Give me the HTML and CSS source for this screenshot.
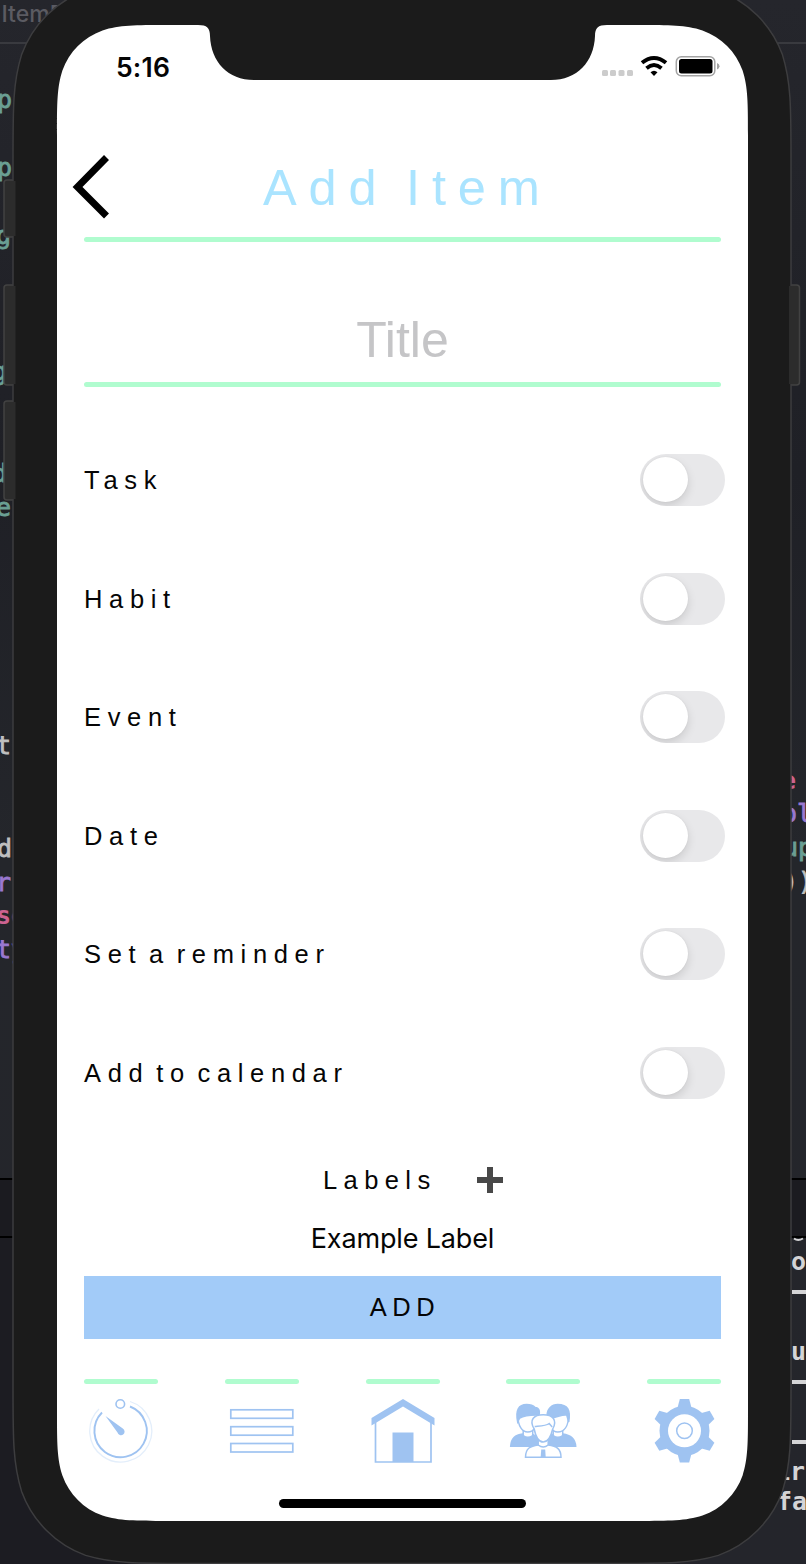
FILE: index.html
```
<!DOCTYPE html>
<html lang="en">
<head>
<meta charset="utf-8">
<title>Add Item</title>
<link rel="stylesheet" href="styles.css">
</head>
<body>
<div class="stage">
  <svg class="backdrop" viewBox="0 0 806 1564" aria-hidden="true">
    <defs>
      <linearGradient id="desk" x1="0" y1="0" x2="0" y2="1">
        <stop offset="0" stop-color="#25262c"/><stop offset=".15" stop-color="#222329"/><stop offset=".3" stop-color="#1f2026"/><stop offset=".55" stop-color="#24262b"/><stop offset="1" stop-color="#24252b"/>
      </linearGradient>
    </defs>
    <rect width="806" height="1564" fill="url(#desk)"/>
    <rect y="1179" width="806" height="57" fill="#1b1b20"/>
    <rect y="1238" width="400" height="326" fill="#1c1c22"/>
    <path d="M0 43H806" stroke="#393a3f" stroke-width="2"/>
    <path d="M0 1179H806M0 1237H806" stroke="#000" stroke-width="2"/>
    <text class="tab-name" x="1.500" y="22">ItemF</text>
    <g class="code type">
      <text x="-3" y="108">p</text><text x="-3" y="176">p</text><text x="-4" y="244">g</text>
      <text x="-8" y="380">g</text><text x="-8" y="482">d</text><text x="-4" y="516">er</text>
      <text x="783" y="856">up</text>
    </g>
    <g class="code plain"><text x="-4" y="754">t:</text><text x="-3" y="857">d</text><text x="783" y="890">)</text><text x="798" y="890">)</text></g>
    <g class="code member"><text x="-4" y="891">r</text><text x="-4" y="958">ty</text><text x="782" y="822">ol</text></g>
    <g class="code keyword"><text x="-4" y="924">se</text><text x="781" y="789">e</text></g>
    <g class="code console">
      <text x="791" y="1270">o</text><text x="791" y="1360">u</text><text x="775" y="1480">ir</text><text x="777" y="1510">fa</text>
      <path d="M792 1292h14M792 1382h14M792 1442h14" stroke="#d4d4d6" stroke-width="4"/>
      <path d="M794 1238.500q4 3 9 0" fill="none" stroke="#d4d4d6" stroke-width="2"/>
    </g>
    <g class="side-button">
      <rect x="4" y="180" width="20" height="57" rx="3"/><rect x="4" y="285" width="20" height="100" rx="3"/>
      <rect x="4" y="401" width="20" height="99" rx="3"/><rect x="779" y="285" width="20.500" height="100" rx="3"/>
    </g>
    <path class="bezel" d="M189-18H615C666-18 691-18 718.400-9.400C748.100 1.400 771.600 24.900 782.400 54.600C791 82 791 107 791 158V1388C791 1439 791 1464 782.400 1491.400C771.600 1521.100 748.100 1544.600 718.400 1555.400C691 1563.500 666 1563.500 615 1563.500H189C138 1563.500 113 1563.500 85.600 1555.400C55.900 1544.600 32.400 1521.100 21.600 1491.400C13 1464 13 1439 13 1388V158C13 107 13 82 21.600 54.600C32.400 24.900 55.900 1.400 85.600-9.400C113-18 138-18 189-18Z"/>
    <path d="M13.500 181V236M13.500 286V384M13.500 402V499M791 286V384" stroke="#2c2c2c" stroke-width="4"/>
    <path fill="#fff" d="M167 25H198C207 25 210 28 210 36C211 62 228 80 254 80H551C577 80 594 62 595 36C595 28 598 25 607 25H638C670 25 685.500 25 702.500 30.400C721.500 37.200 735.800 51.500 742.600 70.500C748 87.500 748 103 748 135V1411C748 1443 748 1458.500 742.600 1475.500C735.800 1494.500 721.500 1508.800 702.500 1515.600C685.500 1521 670 1521 638 1521H167C135 1521 119.500 1521 102.500 1515.600C83.500 1508.800 69.200 1494.500 62.400 1475.500C57 1458.500 57 1443 57 1411V135C57 103 57 87.500 62.400 70.500C69.200 51.500 83.500 37.200 102.500 30.400C119.500 25 135 25 167 25Z"/>
  </svg>

  <main class="screen">
    <div class="status">
      <span class="time">5:16</span>
      <svg class="status-icons" viewBox="600 54 122 24">
        <g fill="#ccc"><rect x="602" y="70" width="6" height="6" rx="1.500"/><rect x="610" y="70" width="6" height="6" rx="1.500"/><rect x="618.500" y="70" width="6" height="6" rx="1.500"/><rect x="627" y="70" width="6" height="6" rx="1.500"/></g>
        <path d="M642 62.800Q654 53 666 62.800" fill="none" stroke="#000" stroke-width="3.900"/>
        <path d="M646.500 68.200Q654 62 661.500 68.200" fill="none" stroke="#000" stroke-width="3.900"/>
        <path d="M650.500 72.300Q654 69 657.500 72.300L654 76Z"/>
        <rect x="676.300" y="56.700" width="38.500" height="19" rx="5" fill="none" stroke="#a3a3a3" stroke-width="1.500"/>
        <rect x="679" y="59" width="33.500" height="14.500" rx="2.500"/>
        <path d="M717 63Q719.500 64 719.500 66.200T717 69.500Z" fill="#a3a3a3"/>
      </svg>
    </div>

    <header class="header">
      <svg class="back" viewBox="72 154 38 66"><path d="M106.500 157.500L77.500 187L106.500 216" fill="none" stroke="#000" stroke-width="7"/></svg>
      <h1 class="heading">Add Item</h1>
    </header>
    <div class="rule"></div>
    <div class="title-field">Title</div>
    <div class="rule"></div>

    <div class="options">
      <div class="option"><span>Task</span><i class="switch"></i></div>
      <div class="option"><span>Habit</span><i class="switch"></i></div>
      <div class="option"><span>Event</span><i class="switch"></i></div>
      <div class="option"><span>Date</span><i class="switch"></i></div>
      <div class="option"><span>Set a reminder</span><i class="switch"></i></div>
      <div class="option"><span>Add to calendar</span><i class="switch"></i></div>
    </div>

    <div class="labels"><span>Labels</span><svg class="plus" viewBox="0 0 26 26"><path d="M13 0V26M0 13H26" stroke="#484848" stroke-width="6"/></svg></div>
    <div class="example">Example Label</div>
    <div class="add">ADD</div>

    <nav class="tabs">
      <div class="tab"><svg viewBox="84 1397 74 68">
        <g fill="none" stroke="#9fc3f1"><circle cx="120.300" cy="1404" r="4.300" stroke-width="1.600"/><path stroke-width="1.900" d="M130 1406.500A26.200 26.200 0 1 1 102 1412.500"/><path stroke="#e3eefb" stroke-width="1.300" d="M130 1401.500A31 31 0 1 1 99 1409"/></g>
        <path fill="#9fc3f1" d="M105.500 1416L122.800 1428.500A3.600 3.600 0 1 1 117.500 1432.500Z"/></svg></div>
      <div class="tab"><svg viewBox="224.700 1397 74 68"><g fill="none" stroke="#9fc3f1" stroke-width="1.700"><rect x="230.500" y="1409.800" width="62" height="8.500"/><rect x="230.500" y="1426.700" width="62" height="8.500"/><rect x="230.500" y="1443.500" width="62" height="8.500"/></g></svg></div>
      <div class="tab"><svg viewBox="365.500 1397 74 68"><g fill="#9fc3f1"><path d="M371 1418L402.500 1399L434 1418V1425.500L402.500 1406.500L371 1425.500Z"/><rect x="392" y="1432.500" width="21" height="29.500"/></g><path d="M375 1422V1462H430.500V1422" fill="none" stroke="#9fc3f1" stroke-width="1.700"/></svg></div>
      <div class="tab"><svg viewBox="506.300 1397 74 68">
        <g fill="#fff" stroke="#9fc3f1" stroke-width="1.500">
          <path fill="#9fc3f1" d="M511 1446.300C511.500 1438 516 1434.500 523 1434L533 1434.500L544 1440L552 1434.500L563 1434C571 1435 575.500 1439 576 1446.300Z"/>
          <path d="M523.500 1429V1435.500Q528 1439 533 1435.500V1429Z"/><path d="M553.500 1429V1435.500Q558 1439 563 1435.500V1429Z"/>
          <path d="M518 1414C518 1427 523 1432 528 1432C534 1432 538 1427 538 1414Z"/><path d="M549 1414C549 1427 553 1432 558 1432C564 1432 569 1427 569 1414Z"/>
          <path fill="#9fc3f1" d="M518 1422C515.500 1410 519 1404.500 527 1404.500C531 1404.500 534 1406 535.500 1407.500C540 1408 540 1412 539.500 1415C533 1415 526 1414.500 520 1418Z"/>
          <path fill="#9fc3f1" d="M569 1422C571 1410 568 1404.500 558 1404.500C552 1404.500 547.500 1409 547.500 1415L551 1418C557 1418 562 1414 567 1415Z"/>
          <path d="M525.800 1457.300C525.800 1448 531 1446 538.500 1445V1440H548.500V1445C557 1446 561.300 1449 561.300 1457.300Z"/>
          <path d="M534.500 1429C529 1420 534 1414.700 543.500 1414.700S558 1420 553 1429Q550 1442 543.500 1442T534.500 1429Z"/>
          <path d="M535 1426.500C540 1426 546 1426 549.500 1423.500L552.500 1427" fill="none"/>
          <path d="M538.500 1445Q543.500 1449 548.500 1445" fill="none"/>
        </g><path d="M541.500 1449.500H545.500L546 1457H541Z" fill="#9fc3f1"/></svg></div>
      <div class="tab"><svg viewBox="647 1397 74 68">
        <g fill="#9fc3f1"><circle cx="684.500" cy="1430.800" r="25"/>
        <path id="tooth" d="M677.500 1408L679.800 1399H689.200L691.500 1408V1453.600L689.200 1462.600H679.800L677.500 1453.600Z"/>
        <use href="#tooth" transform="rotate(60 684.500 1430.800)"/><use href="#tooth" transform="rotate(120 684.500 1430.800)"/></g>
        <circle cx="684.500" cy="1430.800" r="16.500" fill="#fff"/><circle cx="684.500" cy="1430.800" r="7.800" fill="none" stroke="#9fc3f1" stroke-width="1.500"/></svg></div>
    </nav>
    <div class="home-bar"></div>
  </main>
</div>
</body>
</html>
```
FILE: styles.css
```
* { box-sizing: border-box; }
body { margin: 0; background: #222329; }
.stage { position: relative; display: flex; width: 806px; height: 1564px; overflow: hidden; }
.backdrop { position: absolute; inset: 0; width: 806px; height: 1564px; }
.tab-name { font: 500 23px Inter, sans-serif; fill: #5b5b62; }
.code { font: 500 25px "DejaVu Sans Mono", monospace; }
.type { fill: #6a9f93; stroke: #6a9f93; stroke-width: .8; }
.plain { fill: #bfbfbf; stroke: #bfbfbf; stroke-width: .8; }
.member { fill: #9a78d0; stroke: #9a78d0; stroke-width: .8; }
.keyword { fill: #cc6390; font-weight: 700; }
.console { fill: #d4d4d6; font-weight: 700; font-size: 25px; }
.side-button rect { fill: #2c2c2c; stroke: #424242; stroke-width: 1.500px; }
.bezel { fill: #1b1b1b; stroke: #3d3d3f; stroke-width: 1.500px; }

.screen {
  position: relative;
  display: flex;
  flex-direction: column;
  width: 691px;
  height: 1496px;
  margin: 25px 0 0 57px;
  padding: 0 27px;
  font-family: "Liberation Sans", Arial, sans-serif;
  color: #050505;
}
.status { display: flex; justify-content: space-between; height: 129px; padding-top: 29px; }
.time { margin-left: 32px; font: 600 26.500px/26px Inter, sans-serif; letter-spacing: .2px; }
.status-icons { width: 122px; height: 24px; margin-right: -1px; }
.header { display: flex; height: 83px; margin-left: -12px; }
.back { width: 38px; height: 66px; }
.heading { margin: 0 0 0 153px; font-size: 50.500px; line-height: 67px; font-weight: 400; letter-spacing: 11.900px; word-spacing: -8.500px; color: #aae4ff; white-space: nowrap; }
.rule { flex: none; height: 5px; border-radius: 3px; background: #b0fccf; }
.title-field { height: 140px; padding-top: 68px; font-size: 50px; line-height: 60px; text-align: center; color: #c5c5c7; }
.options { display: flex; flex-direction: column; height: 711px; margin-top: 34px; }
.option { display: flex; align-items: center; justify-content: space-between; height: 118.500px; font-size: 25.500px; letter-spacing: 6.650px; word-spacing: -6.900px; margin-right: -4px; white-space: nowrap; }
.option span { padding-top: 1px; }
.switch { display: block; width: 85px; height: 52px; padding: 3px; border-radius: 26px; background: #e8e8ea; overflow: hidden; }
.switch::before { content: ""; display: block; width: 45px; height: 45px; border-radius: 50%; background: #fff; box-shadow: 0 4px 10px rgba(0,0,0,.13), 0 0 2px rgba(0,0,0,.06); }
.labels { display: flex; align-items: center; height: 50px; margin-top: 23px; padding-left: 239px; font-size: 25.500px; letter-spacing: 6.400px; }
.labels span { width: 116px; }
.plus { width: 26px; height: 26px; margin-left: 38px; }
.example { height: 71px; padding-top: 17px; font: 400 27px/33px Inter, sans-serif; letter-spacing: -.15px; text-align: center; }
.add { height: 62.500px; background: #a2cbf8; font-size: 25.500px; line-height: 63px; letter-spacing: 5.600px; text-align: center; padding-left: 5px; }
.tabs { display: flex; justify-content: space-between; height: 91px; margin-top: 40.500px; }
.tab { width: 74px; }
.tab::before { content: ""; display: block; height: 5px; margin-bottom: 13px; border-radius: 3px; background: #b0fccf; }
.tab svg { display: block; width: 74px; height: 68px; }
.home-bar { width: 247px; height: 9px; margin: 29px auto 0; border-radius: 5px; background: #000; }
```
